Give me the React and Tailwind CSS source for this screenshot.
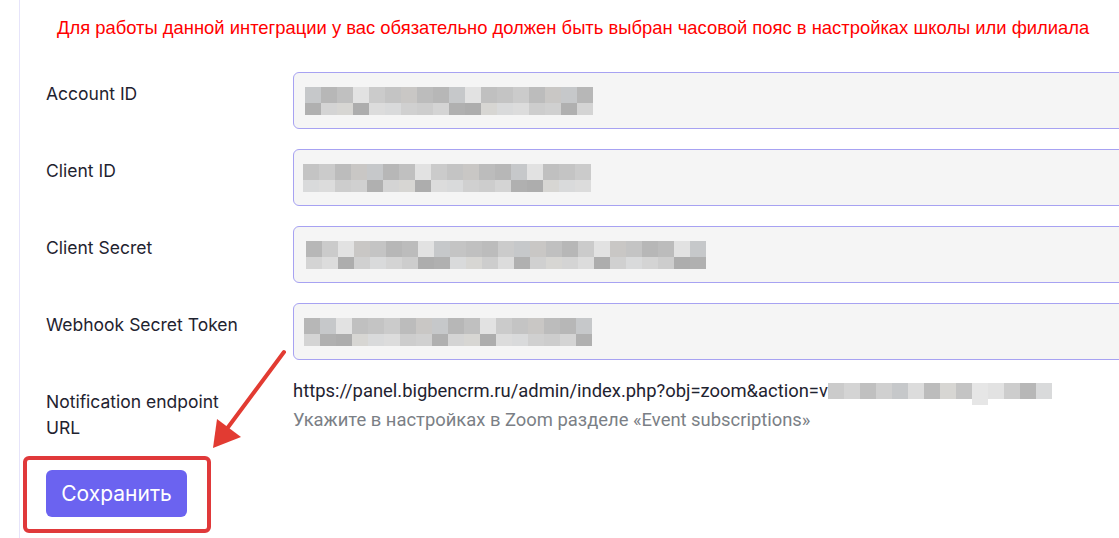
import React from "react";

const palette = ["#cbcbcb","#d4d4d4","#c0c0c0","#d0d0d0","#c6c8ca","#dcdcdc","#bcbcbc","#d7d6d3","#c4c4c4","#b0b0b0","#e2e2e2","#cdcdcd","#b7b7b7","#d9dadb","#c9c7c5","#adadad"];

function Blur({ n, seed, w = 16 }) {
  const rows = [0, 1];
  return (
    <div className="flex flex-col">
      {rows.map((r) => (
        <div key={r} className={"flex " + (r === 0 ? "h-[16px]" : "h-[12px]")}>
          {Array.from({ length: n }).map((_, i) => {
            const c = palette[(i * 7 + seed * 3 + r * 5 + ((i * i + seed) % 4)) % palette.length];
            return <div key={i} style={{ background: c, width: w }} />;
          })}
        </div>
      ))}
    </div>
  );
}

function Field({ label, n, seed, pl }) {
  return (
    <div className="flex">
      <div className="w-[247px] shrink-0 pt-[10px] text-[17.5px] leading-[24px] text-[#1f2330]">{label}</div>
      <div className={"h-[57px] w-[900px] shrink-0 rounded-[6px] border border-[#a7a2f2] bg-[#f5f5f5] flex items-center " + pl}>
        <Blur n={n} seed={seed} />
      </div>
    </div>
  );
}

export default function App() {
  return (
    <div className="relative h-[538px] w-[1119px] overflow-hidden bg-white" style={{ fontFamily: "Inter, 'Noto Sans', sans-serif" }}>
      <div className="ml-[19px] h-full border-l border-[#e6e4fa] pl-[26px]">
        <div className="pt-[17px] pl-[11px] text-[18.4px] leading-[22px] whitespace-nowrap text-[#ff0000]" style={{ fontFamily: "'Liberation Sans', Arial, sans-serif" }}>
          Для работы данной интеграции у вас обязательно должен быть выбран часовой пояс в настройках школы или филиала
        </div>
        <div className="mt-[33px] flex flex-col gap-[20px]">
          <Field label="Account ID" n={18} seed={1} pl="pl-[11px]" />
          <Field label="Client ID" n={18} seed={2} pl="pl-[9px]" />
          <Field label="Client Secret" n={25} seed={3} pl="pl-[12px]" />
          <Field label="Webhook Secret Token" n={18} seed={4} pl="pl-[10px]" />
        </div>
        <div className="mt-[16px] flex">
          <div className="w-[247px] shrink-0 pt-[13px] text-[17.5px] leading-[26px] text-[#1f2330]">
            Notification endpoint<br />URL
          </div>
          <div className="text-[18.4px] leading-[29px] whitespace-nowrap" style={{ fontFamily: "Roboto, sans-serif" }}>
            <div className="flex items-start text-[#1f2330]">
              <span>https://panel.bigbencrm.ru/admin/index.php?obj=zoom&amp;action=v</span>
              <div className="mt-[7px] flex">
                {palette.slice(0, 14).map((c, i) => (
                  <div key={i} className={i === 9 ? "h-[22px]" : "h-[16px]"} style={{ width: 16, background: i === 9 ? "#e6e6e6" : c }} />
                ))}
              </div>
            </div>
            <div className="text-[#7b7f86]">Укажите в настройках в Zoom разделе «Event subscriptions»</div>
          </div>
        </div>
        <div className="mt-[29px]">
          <button className="h-[47px] w-[141px] rounded-[6px] bg-[#6b63f0] text-[21px] text-white">Сохранить</button>
        </div>
      </div>
      <div className="absolute left-[23px] top-[456px] h-[77px] w-[188px] rounded-[6px] border-[4px] border-[#e0393a]" />
      <svg className="absolute left-0 top-0" width="1119" height="538">
        <line x1="284" y1="352" x2="226" y2="430" stroke="#e23b32" strokeWidth="4" strokeLinecap="round" />
        <polygon points="213,448 217,419 241,437" fill="#e23b32" />
      </svg>
    </div>
  );
}
